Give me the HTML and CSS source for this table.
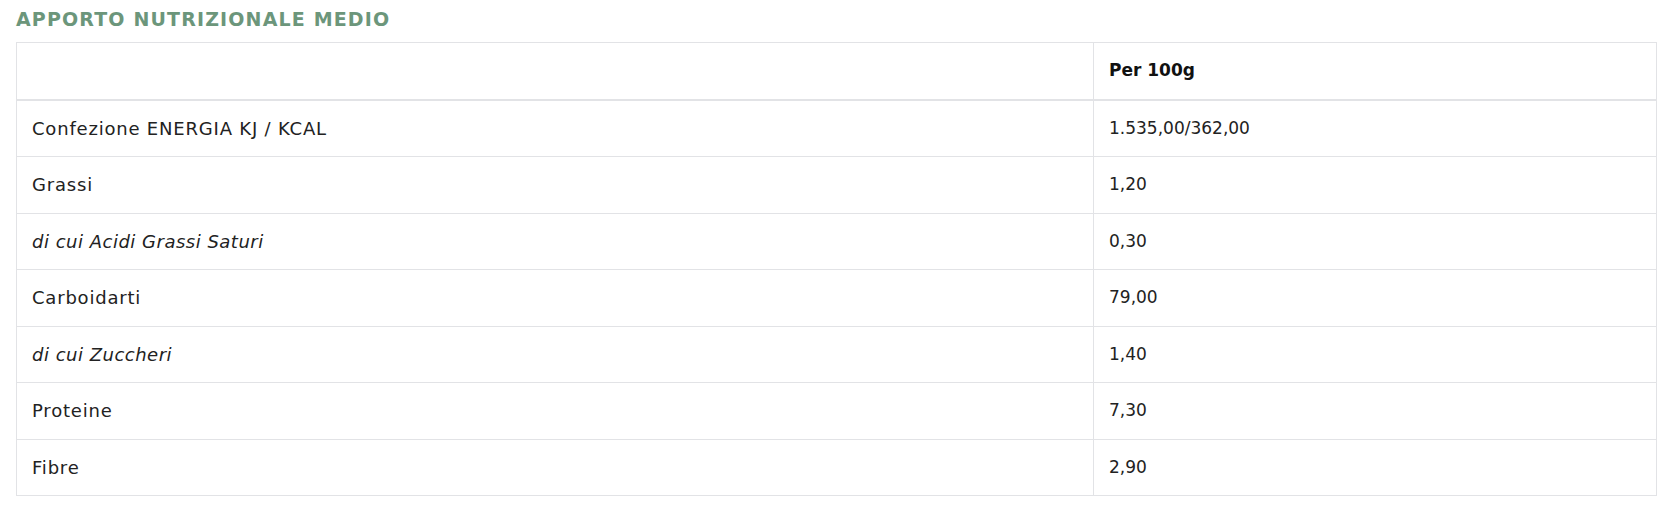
FILE: index.html
```html
<!DOCTYPE html>
<html lang="it">
<head>
<meta charset="utf-8">
<title>Apporto nutrizionale medio</title>
<link rel="stylesheet" href="styles.css">
</head>
<body>
<section class="nutri">
  <h2 class="nutri-title">APPORTO NUTRIZIONALE MEDIO</h2>
  <table class="nutri-table">
    <colgroup><col class="c-name"><col class="c-val"></colgroup>
    <thead>
      <tr><th></th><th>Per 100g</th></tr>
    </thead>
    <tbody>
      <tr><td class="name">Confezione ENERGIA KJ / KCAL</td><td>1.535,00/362,00</td></tr>
      <tr><td class="name">Grassi</td><td>1,20</td></tr>
      <tr><td class="name"><em>di cui Acidi Grassi Saturi</em></td><td>0,30</td></tr>
      <tr><td class="name">Carboidarti</td><td>79,00</td></tr>
      <tr><td class="name"><em>di cui Zuccheri</em></td><td>1,40</td></tr>
      <tr><td class="name">Proteine</td><td>7,30</td></tr>
      <tr><td class="name">Fibre</td><td>2,90</td></tr>
    </tbody>
  </table>
</section>
</body>
</html>
```
FILE: styles.css
```css
html, body { margin: 0; padding: 0; background: #fff; }
body { font-family: "DejaVu Sans", "Liberation Sans", sans-serif; color: #222; }
.nutri { padding: 6px 11px 0 16px; }
.nutri-title {
  margin: 0 0 10px;
  font-size: 19px;
  line-height: 26px;
  font-weight: 700;
  color: #6c967b;
  letter-spacing: 1.15px;
}
.nutri-table {
  width: 1641px;
  border-collapse: collapse;
  table-layout: fixed;
  font-size: 17px;
  line-height: 25.5px;
  border: 1px solid #e2e3e6;
}
.c-name { width: 1077px; }
.nutri-table th, .nutri-table td {
  border: 1px solid #e2e3e6;
  padding: 15px 15px;
  text-align: left;
  vertical-align: middle;
  color: #222;
  font-weight: 400;
}
.nutri-table th { font-weight: 700; color: #111; }
.nutri-table thead th { border-bottom: 2px solid #e2e3e6; }
.nutri-table td.name { font-size: 18px; letter-spacing: 0.8px; }
.nutri-table td.name em { font-style: italic; letter-spacing: 0.5px; }
```
